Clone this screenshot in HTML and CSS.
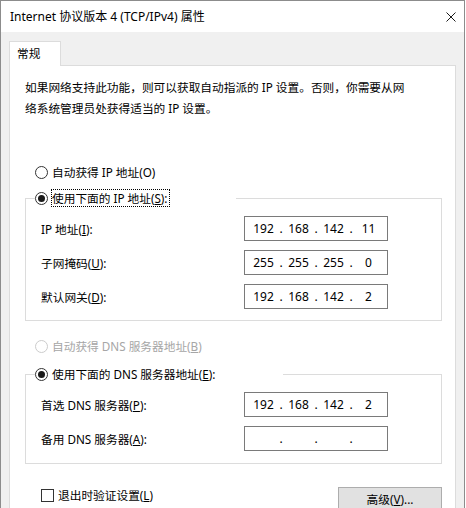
FILE: index.html
```html
<!DOCTYPE html>
<html lang="zh-CN">
<head>
    <meta charset="UTF-8">
    <meta name="viewport" content="width=device-width, initial-scale=1.0">
    <title>Internet 协议版本 4 (TCP/IPv4) 属性</title>
    <link rel="stylesheet" href="styles.css">
</head>
<body>

    <div class="window">
        <div class="titlebar">
            <span class="title">Internet 协议版本 4 (TCP/IPv4) 属性</span>
            <svg class="close" width="10" height="10" viewBox="0 0 10 10">
                <path d="M0.5 0.5 L9.5 9.5 M9.5 0.5 L0.5 9.5" stroke="#1a1a1a" stroke-width="1" fill="none"/>
            </svg>
        </div>

        <div class="content">
            <div class="tabs">
                <div class="tab">常规</div>
            </div>

            <div class="panel">
                <div class="description">
                    如果网络支持此功能，则可以获取自动指派的 IP 设置。否则，你需要从网<br>
                    络系统管理员处获得适当的 IP 设置。
                </div>

                <!-- IP 地址 -->
                <div class="option first-option">
                    <span class="radio"></span>
                    <span class="option-text">自动获得 IP 地址(O)</span>
                </div>

                <fieldset class="group group-ip">
                    <legend>
                        <span class="radio checked"></span>
                        <span class="option-text focused">使用下面的 IP 地址(<u>S</u>):</span>
                    </legend>

                    <div class="row first-row">
                        <span class="label">IP 地址(<u>I</u>):</span>
                        <div class="ip"><span>192</span><i>.</i><span>168</span><i>.</i><span>142</span><i>.</i><span>11</span></div>
                    </div>
                    <div class="row">
                        <span class="label">子网掩码(<u>U</u>):</span>
                        <div class="ip"><span>255</span><i>.</i><span>255</span><i>.</i><span>255</span><i>.</i><span>0</span></div>
                    </div>
                    <div class="row">
                        <span class="label">默认网关(<u>D</u>):</span>
                        <div class="ip"><span>192</span><i>.</i><span>168</span><i>.</i><span>142</span><i>.</i><span>2</span></div>
                    </div>
                </fieldset>

                <!-- DNS -->
                <div class="option dns-option disabled">
                    <span class="radio"></span>
                    <span class="option-text">自动获得 DNS 服务器地址(<u>B</u>)</span>
                </div>

                <fieldset class="group group-dns">
                    <legend>
                        <span class="radio checked"></span>
                        <span class="option-text">使用下面的 DNS 服务器地址(<u>E</u>):</span>
                    </legend>

                    <div class="row first-row">
                        <span class="label">首选 DNS 服务器(<u>P</u>):</span>
                        <div class="ip"><span>192</span><i>.</i><span>168</span><i>.</i><span>142</span><i>.</i><span>2</span></div>
                    </div>
                    <div class="row">
                        <span class="label">备用 DNS 服务器(<u>A</u>):</span>
                        <div class="ip"><span></span><i>.</i><span></span><i>.</i><span></span><i>.</i><span></span></div>
                    </div>
                </fieldset>

                <div class="footer">
                    <div class="check-option">
                        <span class="checkbox"></span>
                        <span class="option-text">退出时验证设置(<u>L</u>)</span>
                    </div>
                    <button class="btn">高级(<u>V</u>)...</button>
                </div>
            </div>
        </div>
    </div>

</body>
</html>
```

FILE: styles.css
```css
body {
    margin: 0;
    padding: 0;
    background-color: #fff;
    font-family: 'Noto Sans', 'Noto Sans CJK SC', sans-serif;
    font-size: 11.7px;
    color: #000;
    overflow: hidden;
}

.window {
    width: 465px;
    height: 508px;
    box-sizing: border-box;
    border: 1px solid #8c8c8c;
    border-bottom: none;
    background-color: #f0f0f0;
    display: flex;
    flex-direction: column;
    overflow: hidden;
}

.titlebar {
    height: 31px;
    flex-shrink: 0;
    background-color: #fff;
    display: flex;
    align-items: center;
    justify-content: space-between;
    padding: 0 8px 0 9px;
}

.title {
    font-size: 12px;
    line-height: 16px;
}

.content {
    padding: 9px 0 0 8px;
}

.tabs {
    display: flex;
}

.tab {
    position: relative;
    z-index: 1;
    width: 52px;
    height: 25px;
    box-sizing: border-box;
    margin-bottom: -1px;
    padding-left: 7px;
    line-height: 23px;
    background-color: #fff;
    border: 1px solid #dcdcdc;
    border-bottom: none;
}

.panel {
    width: 447px;
    height: 460px;
    box-sizing: border-box;
    background-color: #fff;
    border: 1px solid #dcdcdc;
    padding: 11px 13px 0 15px;
}

.description {
    line-height: 21px;
}

.option {
    display: flex;
    align-items: center;
    height: 18px;
    margin-left: 10px;
}

.first-option {
    margin-top: 44px;
}

.dns-option {
    margin-top: 16px;
}

.option-text {
    line-height: 18px;
    white-space: nowrap;
}

.focused {
    outline: 1px dotted #000;
    outline-offset: -1px;
    padding: 0 2px 0 1px;
    margin-left: -1px;
}

.disabled {
    color: #a6a6a6;
}

.radio {
    width: 13px;
    height: 13px;
    box-sizing: border-box;
    border: 1px solid #333;
    border-radius: 50%;
    background-color: #fff;
    margin-right: 4px;
    display: flex;
    align-items: center;
    justify-content: center;
    flex-shrink: 0;
}

.radio.checked::after {
    content: '';
    width: 7px;
    height: 7px;
    border-radius: 50%;
    background-color: #1a1a1a;
}

.disabled .radio {
    border-color: #cccccc;
}

.group {
    margin: 8px 0 0 0;
    padding: 0 0 11px 15px;
    border: 1px solid #dcdcdc;
    min-width: 0;
}

.group legend {
    display: flex;
    align-items: center;
    height: 18px;
    padding: 0;
    margin-left: -6px;
    background-color: #fff;
}

.group-ip legend {
    width: 201px;
}

.group-dns {
    margin-top: 10px;
    padding-bottom: 12px;
}

.group-dns legend {
    width: 248px;
}

.row {
    display: flex;
    align-items: center;
    margin-top: 9px;
}

.label {
    width: 203px;
    line-height: 18px;
}

.ip {
    display: flex;
    align-items: center;
    width: 144px;
    height: 25px;
    box-sizing: border-box;
    border: 1px solid #7a7a7a;
    padding-left: 3px;
    font-size: 12px;
    line-height: 18px;
}

.ip span {
    width: 31px;
    text-align: center;
}

.ip i {
    width: 4px;
    font-style: normal;
    text-align: center;
}

.footer {
    display: flex;
    justify-content: space-between;
    align-items: flex-start;
    padding-left: 16px;
}

.check-option {
    display: flex;
    align-items: center;
    height: 18px;
    margin-top: 22px;
}

.checkbox {
    width: 13px;
    height: 13px;
    box-sizing: border-box;
    border: 1px solid #333;
    background-color: #fff;
    margin-right: 4px;
}

.btn {
    margin-top: 23px;
    width: 104px;
    height: 24px;
    background-color: #e1e1e1;
    border: 1px solid #adadad;
    font-family: inherit;
    font-size: inherit;
    color: #000;
    padding: 0;
    line-height: 20px;
}
```
